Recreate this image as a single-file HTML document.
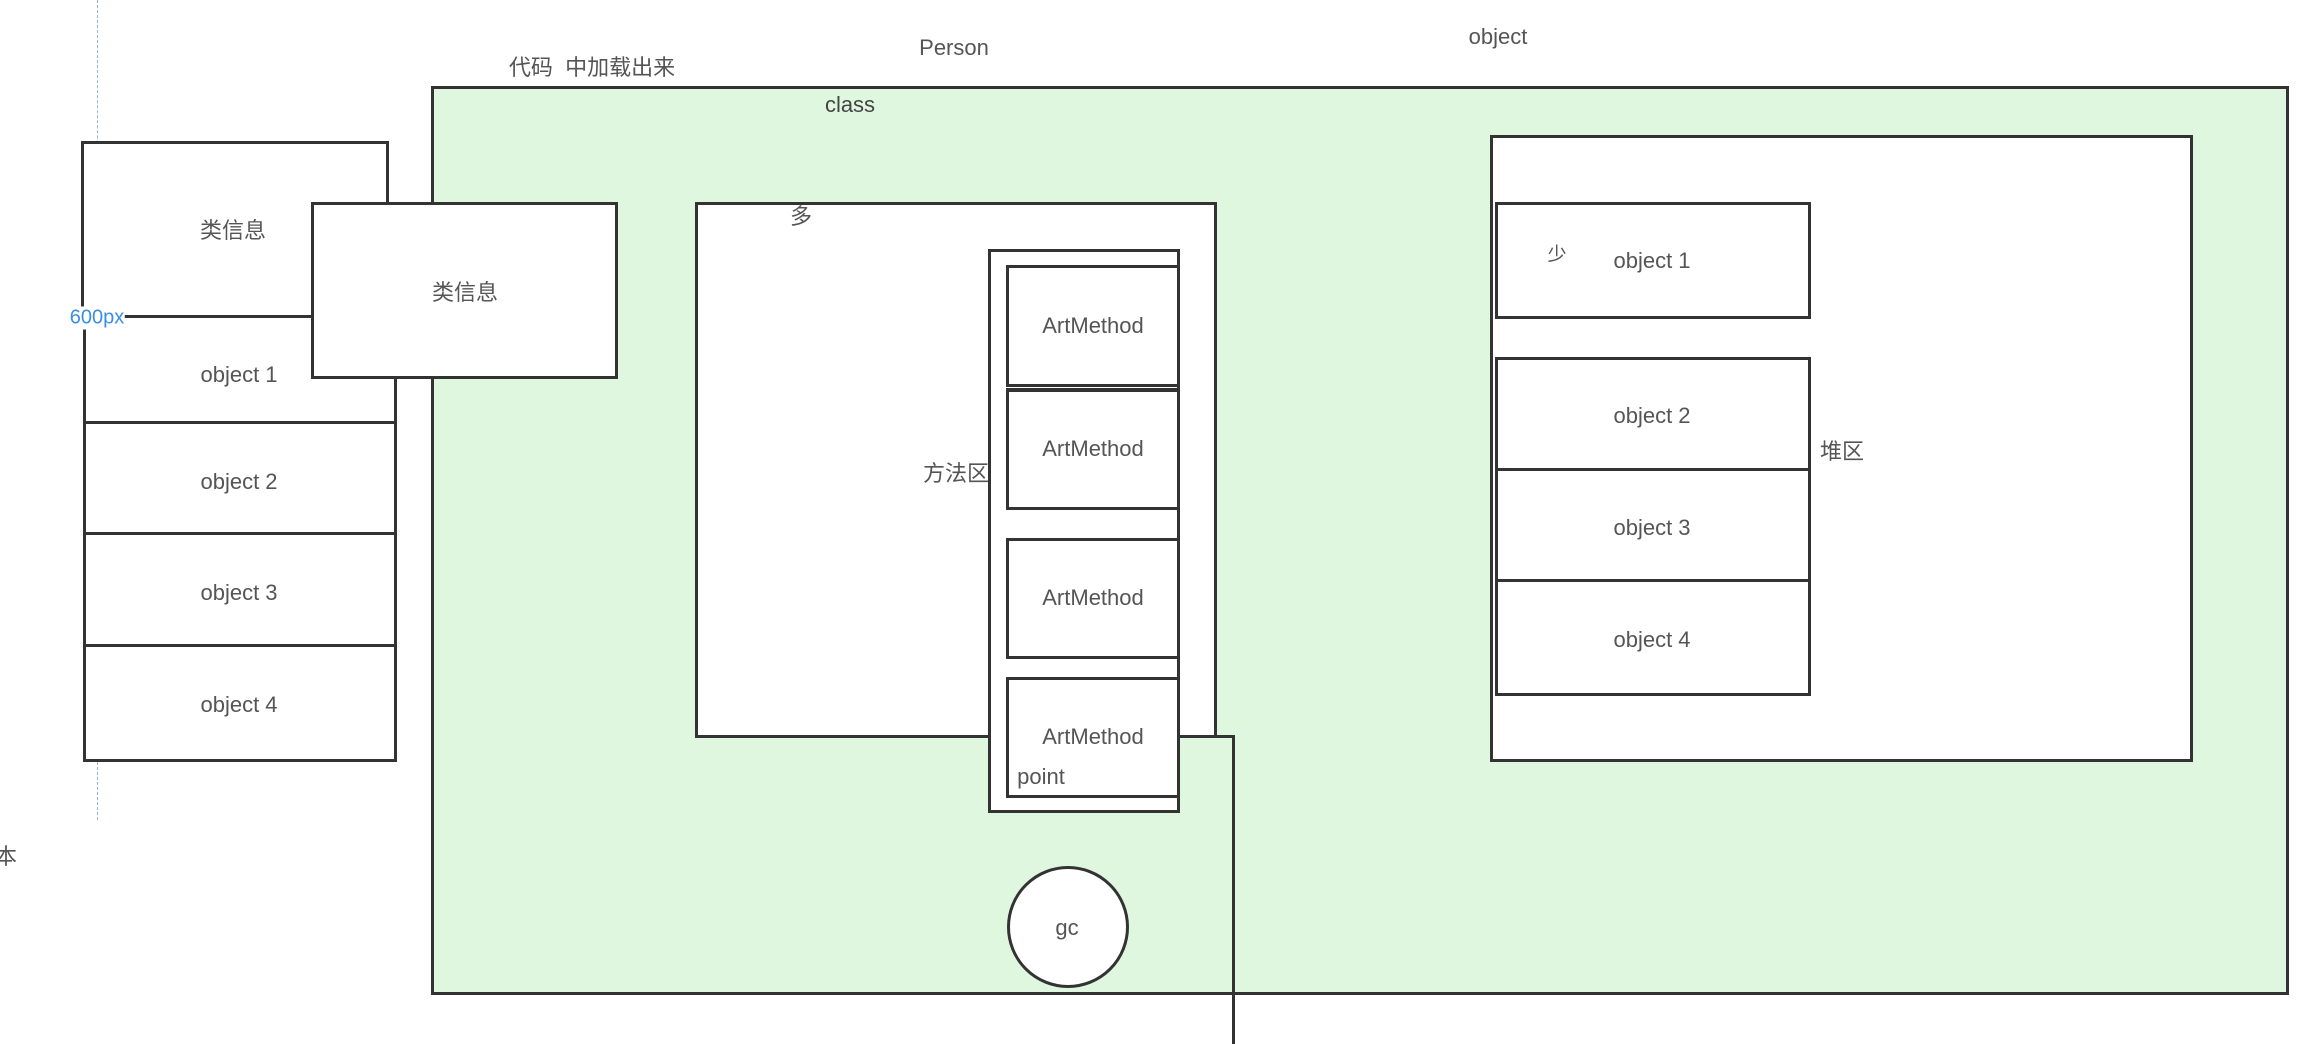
<!DOCTYPE html>
<html><head><meta charset="utf-8"><style>
body{margin:0;width:2314px;height:1044px;background:#fff;position:relative;overflow:hidden;font-family:"Liberation Sans","Noto Sans CJK SC",sans-serif;color:#555;font-size:22px}
.b{position:absolute;box-sizing:border-box;border:3px solid #333;background:#fff}
.t{position:absolute;white-space:nowrap;transform:translate(-50%,-50%)}
.l{position:absolute;background:#333}
</style></head><body>
<div style="position:absolute;left:97px;top:0;height:820px;border-left:1.5px dashed #9ab0d8"></div>
<div class="t" style="left:6px;top:855px">本</div>
<div class="t" style="left:592px;top:66px">代码&nbsp;&nbsp;中加载出来</div>
<div class="t" style="left:954px;top:48px">Person</div>
<div class="t" style="left:1498px;top:37px">object</div>

<div class="b" style="left:81px;top:141px;width:308px;height:177px;border-bottom:none"></div>
<div class="t" style="left:233px;top:229px">类信息</div>
<div class="b" style="left:83px;top:315px;width:314px;height:447px"></div>
<div class="l" style="left:83px;top:421px;width:314px;height:3px"></div>
<div class="l" style="left:83px;top:532px;width:314px;height:3px"></div>
<div class="l" style="left:83px;top:644px;width:314px;height:3px"></div>
<div class="t" style="left:239px;top:375px">object 1</div>
<div class="t" style="left:239px;top:482px">object 2</div>
<div class="t" style="left:239px;top:593px">object 3</div>
<div class="t" style="left:239px;top:705px">object 4</div>

<div class="b" style="left:431px;top:86px;width:1858px;height:909px;background:#dff7df"></div>
<div class="t" style="left:850px;top:105px;color:#444">class</div>

<div class="b" style="left:311px;top:202px;width:307px;height:177px"></div>
<div class="t" style="left:465px;top:291px">类信息</div>

<div class="b" style="left:695px;top:202px;width:522px;height:536px"></div>
<div class="t" style="left:801px;top:215px">多</div>
<div class="t" style="left:956px;top:472px">方法区</div>
<div class="l" style="left:1180px;top:735px;width:54px;height:3px"></div>
<div class="l" style="left:1232px;top:735px;width:3px;height:309px"></div>
<div class="b" style="left:988px;top:249px;width:192px;height:564px"></div>
<div class="b" style="left:1006px;top:265px;width:174px;height:122px"></div>
<div class="b" style="left:1006px;top:388px;width:174px;height:122px;border-top-width:4px"></div>
<div class="b" style="left:1006px;top:538px;width:174px;height:121px"></div>
<div class="b" style="left:1006px;top:677px;width:174px;height:121px"></div>
<div class="t" style="left:1093px;top:326px">ArtMethod</div>
<div class="t" style="left:1093px;top:449px">ArtMethod</div>
<div class="t" style="left:1093px;top:598px">ArtMethod</div>
<div class="t" style="left:1093px;top:737px">ArtMethod</div>
<div class="t" style="left:1041px;top:777px">point</div>
<div class="b" style="left:1007px;top:866px;width:122px;height:122px;border-radius:50%"></div>
<div class="t" style="left:1067px;top:928px">gc</div>

<div class="b" style="left:1490px;top:135px;width:703px;height:627px"></div>
<div class="b" style="left:1495px;top:202px;width:316px;height:117px"></div>
<div class="b" style="left:1495px;top:357px;width:316px;height:339px"></div>
<div class="l" style="left:1495px;top:468px;width:316px;height:3px"></div>
<div class="l" style="left:1495px;top:579px;width:316px;height:3px"></div>
<div class="t" style="left:1557px;top:253px;font-size:19px">少</div>
<div class="t" style="left:1652px;top:261px">object 1</div>
<div class="t" style="left:1652px;top:416px">object 2</div>
<div class="t" style="left:1652px;top:528px">object 3</div>
<div class="t" style="left:1652px;top:640px">object 4</div>
<div class="t" style="left:1842px;top:450px">堆区</div>
<div class="t" style="left:97px;top:318px;color:#3a8ee6;background:#fff;font-size:20px">600px</div>
</body></html>
